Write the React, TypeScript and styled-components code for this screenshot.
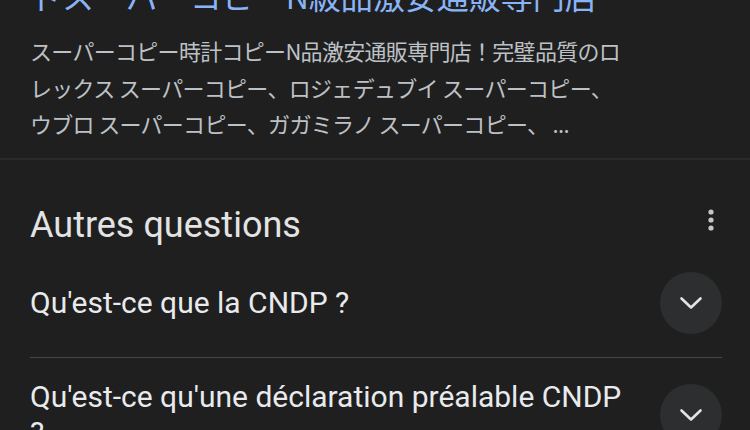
import React from 'react';
import styled, { createGlobalStyle } from 'styled-components';

const GlobalStyle = createGlobalStyle`
  html, body {
    margin: 0;
    padding: 0;
    background: #1f1f1f;
    overflow: hidden;
  }
`;

const Page = styled.div`
  width: 750px;
  height: 430px;
  overflow: hidden;
  display: flex;
  flex-direction: column;
  background: #171717;
`;

const ResultCard = styled.div`
  background: #1f1f1f;
  padding: 0 30px 16px;
  border-bottom: 1px solid #2a2a2a;
`;

const ResultTitle = styled.div`
  margin-top: -27px;
  font-family: 'Noto Sans CJK JP', 'Roboto', sans-serif;
  font-size: 32px;
  line-height: 44px;
  color: #8ab4f8;
  white-space: nowrap;
`;

const Snippet = styled.p`
  margin: 15px 0 0;
  font-family: 'Noto Sans CJK JP', 'Roboto', sans-serif;
  font-size: 22px;
  line-height: 36.5px;
  letter-spacing: -0.7px;
  color: #bdc1c6;
  white-space: nowrap;
`;

const Gap = styled.div`
  height: 11px;
  background: #181818;
`;

const QuestionsCard = styled.div`
  flex: 1;
  background: #1f1f1f;
  border-top: 1px solid #2a2a2a;
  padding: 0 28px 0 30px;
`;

const Header = styled.div`
  display: flex;
  align-items: center;
  justify-content: space-between;
  margin-top: 43px;
`;

const HeaderTitle = styled.h2`
  margin: 0;
  font-family: 'Roboto', 'Noto Sans', sans-serif;
  font-weight: 400;
  font-size: 36px;
  line-height: 44px;
  color: #e3e3e3;
`;

const MenuIcon = styled.svg`
  margin-bottom: 10px;
  margin-right: -1px;
`;

const QuestionRow = styled.div<{ $top: number; $bottom: number; $divider?: boolean }>`
  display: flex;
  align-items: center;
  gap: 18px;
  padding: ${(p) => p.$top}px 0 ${(p) => p.$bottom}px;
  border-bottom: ${(p) => (p.$divider ? '1px solid #474747' : 'none')};
`;

const QuestionText = styled.div`
  flex: 1;
  font-family: 'Roboto', 'Noto Sans', sans-serif;
  font-size: 30px;
  line-height: 36px;
  color: #e8eaed;
`;

const ExpandButton = styled.div`
  flex: none;
  width: 62px;
  height: 62px;
  border-radius: 50%;
  background: #2d2e30;
  display: flex;
  align-items: center;
  justify-content: center;
`;

const questions = [
  "Qu'est-ce que la CNDP ?",
  "Qu'est-ce qu'une déclaration préalable CNDP ?",
];

const Chevron = () => (
  <svg width="24" height="24" viewBox="0 0 24 24">
    <polyline
      points="2.5,7.5 12,16.5 21.5,7.5"
      fill="none"
      stroke="#e3e3e3"
      strokeWidth="2.6"
      strokeLinecap="round"
      strokeLinejoin="round"
    />
  </svg>
);

const App = (): React.ReactElement => {
  return (
    <>
      <GlobalStyle />
      <Page>
        <ResultCard>
          <ResultTitle>ドスーパーコピーN級品激安通販専門店</ResultTitle>
          <Snippet>
            スーパーコピー時計コピーN品激安通販専門店！完璧品質のロ
            <br />
            レックス スーパーコピー、ロジェデュブイ スーパーコピー、
            <br />
            ウブロ スーパーコピー、ガガミラノ スーパーコピー、 ...
          </Snippet>
        </ResultCard>
        <Gap />
        <QuestionsCard>
          <Header>
            <HeaderTitle>Autres questions</HeaderTitle>
            <MenuIcon width="24" height="24" viewBox="0 0 24 24">
              <circle cx="12" cy="4" r="2.6" fill="#c4c7c5" />
              <circle cx="12" cy="12" r="2.6" fill="#c4c7c5" />
              <circle cx="12" cy="20" r="2.6" fill="#c4c7c5" />
            </MenuIcon>
          </Header>
          {questions.map((q, index) => (
            <QuestionRow
              key={index}
              $top={index === 0 ? 25 : 21}
              $bottom={23}
              $divider={index < questions.length - 1}
            >
              <QuestionText>{q}</QuestionText>
              <ExpandButton>
                <Chevron />
              </ExpandButton>
            </QuestionRow>
          ))}
        </QuestionsCard>
      </Page>
    </>
  );
};

export default App;
